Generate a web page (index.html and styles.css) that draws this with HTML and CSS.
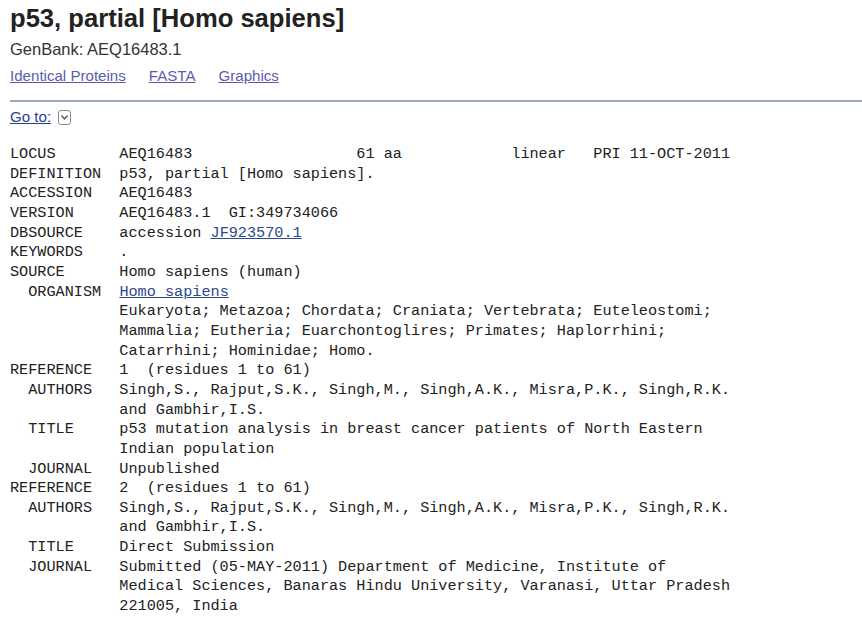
FILE: index.html
```html
<!DOCTYPE html>
<html>
<head>
<meta charset="utf-8">
<link rel="stylesheet" href="styles.css">
</head>
<body>
<div class="page">
  <h1 class="title">p53, partial [Homo sapiens]</h1>
  <div class="subtitle">GenBank: AEQ16483.1</div>
  <div class="links">
    <a href="#" class="vlink">Identical Proteins</a>
    <a href="#" class="vlink">FASTA</a>
    <a href="#" class="vlink">Graphics</a>
  </div>
  <div class="rule"></div>
  <div class="goto">
    <a href="#" class="goto-link">Go to:</a>
    <svg class="goto-icon" width="13" height="15" viewBox="0 0 13 15">
      <rect x="0.5" y="0.5" width="12" height="14" rx="2.5" ry="2.5" fill="#fff" stroke="#8a8a8a"/>
      <polyline points="3.5,5.5 6.5,9 9.5,5.5" fill="none" stroke="#555" stroke-width="1.3"/>
    </svg>
  </div>
<pre class="record">LOCUS       AEQ16483                  61 aa            linear   PRI 11-OCT-2011
DEFINITION  p53, partial [Homo sapiens].
ACCESSION   AEQ16483
VERSION     AEQ16483.1  GI:349734066
DBSOURCE    accession <a href="#" class="rlink">JF923570.1</a>
KEYWORDS    .
SOURCE      Homo sapiens (human)
  ORGANISM  <a href="#" class="rlink">Homo sapiens</a>
            Eukaryota; Metazoa; Chordata; Craniata; Vertebrata; Euteleostomi;
            Mammalia; Eutheria; Euarchontoglires; Primates; Haplorrhini;
            Catarrhini; Hominidae; Homo.
REFERENCE   1  (residues 1 to 61)
  AUTHORS   Singh,S., Rajput,S.K., Singh,M., Singh,A.K., Misra,P.K., Singh,R.K.
            and Gambhir,I.S.
  TITLE     p53 mutation analysis in breast cancer patients of North Eastern
            Indian population
  JOURNAL   Unpublished
REFERENCE   2  (residues 1 to 61)
  AUTHORS   Singh,S., Rajput,S.K., Singh,M., Singh,A.K., Misra,P.K., Singh,R.K.
            and Gambhir,I.S.
  TITLE     Direct Submission
  JOURNAL   Submitted (05-MAY-2011) Department of Medicine, Institute of
            Medical Sciences, Banaras Hindu University, Varanasi, Uttar Pradesh
            221005, India</pre>
</div>
</body>
</html>
```

FILE: styles.css
```css
html, body {
  margin: 0;
  padding: 0;
  background: #fff;
}

.page {
  padding-left: 10px;
  font-family: "Liberation Sans", Arial, sans-serif;
}

.title {
  margin: 0;
  padding-top: 3px;
  font-size: 25.6px;
  line-height: 30px;
  font-weight: bold;
  color: #222;
}

.subtitle {
  margin-top: 6px;
  font-size: 16.5px;
  line-height: 20px;
  color: #333;
}

.links {
  margin-top: 7px;
  display: flex;
  gap: 23px;
  font-size: 15.1px;
  line-height: 20px;
}

.vlink {
  color: #5c5cad;
  text-decoration: underline;
}

.rule {
  margin-top: 14px;
  border-top: 2px solid #97a9c5;
}

.goto {
  margin-top: 5px;
  display: flex;
  align-items: center;
  gap: 7px;
  font-size: 15.1px;
  line-height: 20px;
}

.goto-link {
  color: #2b3f8c;
  text-decoration: underline;
}

.goto-icon {
  display: block;
  margin-top: 1px;
}

.record {
  margin: 18px 0 0 0;
  font-family: "Liberation Mono", "Courier New", monospace;
  font-size: 15.2px;
  line-height: 19.65px;
  color: #222;
}

.rlink {
  color: #2c4a8d;
  text-decoration: underline;
}
```
